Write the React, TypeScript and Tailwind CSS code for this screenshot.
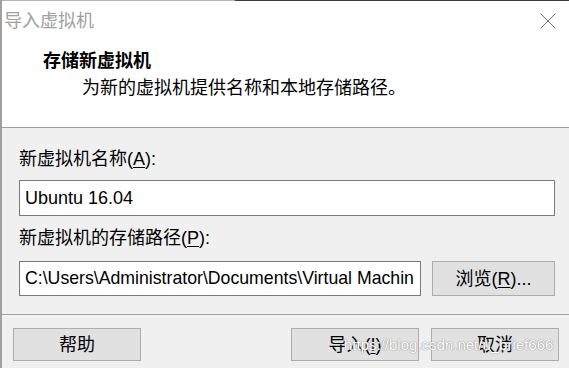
import React from 'react'

const font = "font-['Liberation_Sans','Noto_Sans_CJK_SC',sans-serif]"

const Key = ({ k }: { k: string }) => <span className="underline underline-offset-2">{k}</span>

const WinButton = ({ children, w }: { children: React.ReactNode; w: string }) => (
  <button
    className={`${w} h-[33px] bg-[#e1e1e1] border border-[#adadad] text-[18px] leading-[18px] text-black flex items-center justify-center`}
  >
    {children}
  </button>
)

export default function App() {
  return (
    <div
      className={`${font} relative w-[569px] h-[368px] overflow-hidden bg-[#f0f0f0] border-l-2 border-[#a0a0a0] flex flex-col`}
    >
      {/* window top edge */}
      <div className="flex h-px shrink-0">
        <div className="w-[233px] bg-[#b4b4b4]" />
        <div className="flex-1 bg-[#3c3c3c]" />
      </div>

      {/* header */}
      <div className="h-[127px] shrink-0 bg-white border-b border-[#a0a0a0]">
        <div className="flex items-start justify-between pt-[11px] pl-[2px] pr-[13px]">
          <span className="text-[18px] leading-[18px] text-[#a0a0a0]">导入虚拟机</span>
          <svg width="16" height="16" viewBox="0 0 16 16" className="mt-[1px]">
            <path d="M0.5 0.5 L15.5 15.5 M15.5 0.5 L0.5 15.5" stroke="#707070" strokeWidth="1" fill="none" />
          </svg>
        </div>
        <div className="mt-[22px] pl-[41px] text-[18px] leading-[18px] font-bold text-black">存储新虚拟机</div>
        <div className="mt-[9px] pl-[80px] text-[18px] leading-[18px] text-black">
          为新的虚拟机提供名称和本地存储路径。
        </div>
      </div>

      {/* body */}
      <div className="shrink-0 pl-[17px] pr-[14px] pt-[22px] pb-[18px] border-b border-[#a0a0a0]">
        <div className="text-[18px] leading-[18px] text-black">
          新虚拟机名称(<Key k="A" />):
        </div>
        <div className="mt-[12px] h-[36px] bg-white border border-[#7a7a7a] flex items-center px-[5px] text-[18px] text-black">
          Ubuntu 16.04
        </div>
        <div className="mt-[13px] text-[18px] leading-[18px] text-black">
          新虚拟机的存储路径(<Key k="P" />):
        </div>
        <div className="mt-[14px] flex gap-[11px]">
          <div className="flex-1 h-[35px] bg-white border border-[#7a7a7a] flex items-center px-[5px] text-[17.7px] text-black whitespace-nowrap overflow-hidden">
            C:\Users\Administrator\Documents\Virtual Machin
          </div>
          <button className="w-[123px] h-[35px] bg-[#e1e1e1] border border-[#adadad] text-[18px] leading-[18px] text-black">
            浏览(<Key k="R" />)...
          </button>
        </div>
      </div>

      {/* footer */}
      <div className="flex pt-[13px] pl-[11px] pr-[10px]">
        <WinButton w="w-[128px]">帮助</WinButton>
        <div className="flex-1" />
        <div className="flex gap-[12px]">
          <WinButton w="w-[128px]">
            导入(<Key k="I" />)
          </WinButton>
          <WinButton w="w-[128px]">取消</WinButton>
        </div>
      </div>

      {/* blog watermark */}
      <span className="absolute left-[342px] top-[336px] text-[15px] leading-[18px] text-white [text-shadow:0_0_1px_#8a8a8a,0_0_1px_#8a8a8a] pointer-events-none">
        https://blog.csdn.net/u_brief666
      </span>
    </div>
  )
}
